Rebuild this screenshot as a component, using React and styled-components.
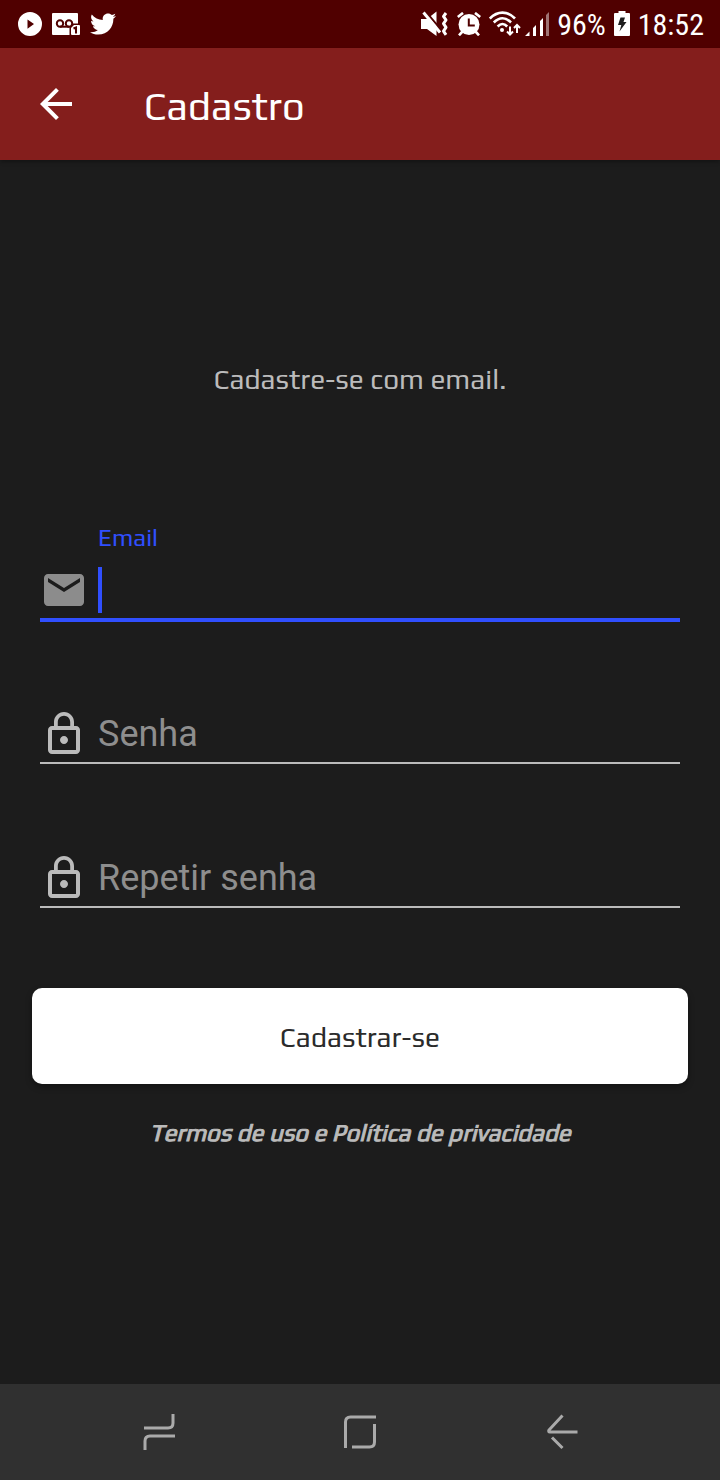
import React from "react";
import styled, { createGlobalStyle, css } from "styled-components";
import { FaTwitter } from "react-icons/fa";

const titleFont = `Play, "Noto Sans", "Open Sans", sans-serif`;
const inputFont = `Roboto, "Noto Sans", sans-serif`;
const statusFont = `"Roboto Condensed", "Liberation Sans Narrow", sans-serif`;

const GlobalStyle = createGlobalStyle`
  *, *::before, *::after { box-sizing: border-box; }
  body { margin: 0; background: #1c1c1c; }
  svg { display: block; flex: none; }
`;

const Screen = styled.div`
  display: flex;
  flex-direction: column;
  min-height: 100vh;
  background: #1c1c1c;
  font-family: ${titleFont};
`;

const StatusBar = styled.div`
  display: flex;
  align-items: center;
  justify-content: space-between;
  height: 48px;
  padding: 0 16px 0 18px;
  background: #500000;
  color: #fff;
`;

const StatusGroup = styled.div`
  display: flex;
  align-items: center;
  gap: ${(p) => p.$gap}px;
`;

const StatusText = styled.span`
  padding-top: 2px;
  font: 30px/46px ${statusFont};
`;

const AppBar = styled.header`
  display: flex;
  align-items: center;
  gap: 64px;
  height: 112px;
  padding: 0 32px;
  background: #841e1c;
  color: #fff;
  box-shadow: 0 2px 4px rgba(0, 0, 0, 0.3);
`;

const IconButton = styled.button`
  display: flex;
  padding: 0;
  border: 0;
  background: none;
  color: inherit;
`;

const Title = styled.h1`
  margin: 0;
  padding-top: 4px;
  font-size: 40px;
  font-weight: 400;
  line-height: 48px;
`;

const Content = styled.main`
  flex: 1;
  padding: 200px 32px 32px;
`;

const Intro = styled.p`
  margin: 0 0 124px;
  color: #bbb;
  font-size: 28px;
  line-height: 38px;
  text-align: center;
`;

const Fields = styled.div`
  display: flex;
  flex-direction: column;
  gap: 44px;
  margin: 0 8px 78px;
`;

const Field = styled.div`
  position: relative;
  padding-top: 44px;
`;

const FieldRow = styled.div`
  display: flex;
  gap: 10px;
  padding-bottom: 4px;
`;

const Label = styled.label`
  position: absolute;
  left: 58px;
  pointer-events: none;
  ${(p) =>
    p.$floating
      ? css`
          top: 0;
          color: #304ffe;
          font-size: 24px;
          line-height: 32px;
        `
      : css`
          top: 44px;
          color: #8e8e8e;
          font: 36px/48px ${inputFont};
        `}
`;

const Input = styled.input`
  flex: 1;
  min-width: 0;
  height: 48px;
  padding: 0;
  border: 0;
  outline: 0;
  background: none;
  color: #fff;
  caret-color: transparent;
  font: 36px/48px ${inputFont};
`;

const Caret = styled.span`
  position: absolute;
  top: 45px;
  left: 58px;
  width: 4px;
  height: 46px;
  background: #304ffe;
`;

const Underline = styled.div`
  height: 4px;
  border-top: ${(p) => (p.$active ? "4px solid #304ffe" : "2px solid #bbb")};
`;

const SubmitButton = styled.button`
  display: block;
  width: 100%;
  height: 96px;
  margin: 0 0 32px;
  padding: 2px 0 0;
  border: 0;
  border-radius: 10px;
  background: #fff;
  color: #2b2b2b;
  font: 28px/40px ${titleFont};
  box-shadow: 0 3px 6px rgba(0, 0, 0, 0.35);
`;

const Terms = styled.a`
  display: block;
  color: #bbb;
  font-size: 24px;
  font-style: italic;
  line-height: 34px;
  text-align: center;
  text-decoration: none;
  -webkit-text-stroke: 1px #bbb;
`;

const NavBar = styled.nav`
  display: flex;
  height: 96px;
  padding: 0 60px;
  background: #303030;
  color: #aaa;
`;

const NavButton = styled(IconButton)`
  flex: 1;
  align-items: center;
  justify-content: center;
`;

const PlayIcon = () => (
  <svg width="24" height="24" viewBox="0 0 24 24" fill="currentColor">
    <path fillRule="evenodd" d="M12 0a12 12 0 1 0 0 24a12 12 0 0 0 0-24zM9.500 7.500v9.200l6.500-4.600z" />
  </svg>
);

const VoicemailIcon = () => (
  <svg width="28" height="24" viewBox="0 0 28 24">
    <path fill="#fff" d="M1 1h24a1 1 0 0 1 1 1v20a1 1 0 0 1-1 1H1a1 1 0 0 1-1-1V2a1 1 0 0 1 1-1z" />
    <g fill="none" stroke="#500000" strokeWidth="2">
      <circle cx="8" cy="11.500" r="3.200" />
      <circle cx="17" cy="11.500" r="3.200" />
      <path d="M8 14.700h9" />
    </g>
    <path fill="#500000" d="M21 11.500h7V24H17.500v-9z" />
    <path fill="#fff" d="M22 13h5a1 1 0 0 1 1 1v8a1 1 0 0 1-1 1h-7a1 1 0 0 1-1-1v-6z" />
    <path fill="none" stroke="#500000" strokeWidth="2" d="M21.500 16.500l2.500-1v6" />
  </svg>
);

const MutedVibrateIcon = () => (
  <svg width="28" height="26" viewBox="0 0 28 26">
    <path fill="#fff" d="M0 8h6l9.500-7.500v24.500L6 18H0z" />
    <path stroke="#500000" strokeWidth="2" d="M5 1L21 20" />
    <path stroke="#fff" strokeWidth="3" d="M2.500 1.500L19 21.500" />
    <path fill="none" stroke="#fff" strokeWidth="3" strokeLinejoin="round" d="M25 2l-2.500 3.300 2.500 3.700-2.500 3.700 2.500 3.700-2.500 3.700 2.500 3.700" />
  </svg>
);

const AlarmIcon = () => (
  <svg width="24" height="24" viewBox="0 0 24 24">
    <circle cx="12" cy="12.500" r="10.500" fill="#fff" />
    <path stroke="#fff" strokeWidth="2.600" d="M0.800 5L6 0.900M18 0.900L23.200 5M5.500 19.500L2 23.300M18.500 19.500l3.500 3.800" />
    <path fill="none" stroke="#500000" strokeWidth="2" d="M11.800 6.500v7h6" />
  </svg>
);

const WifiIcon = () => (
  <svg width="32" height="26" viewBox="0 0 32 26">
    <g fill="none" stroke="#fff" strokeWidth="2.600">
      <path d="M0.800 7.500C8.500 -0.400 18.500 -0.400 26 7.500" />
      <path d="M4.800 11.500C10.500 5.800 16.500 5.800 22 11.500" />
      <path d="M8.600 15.500C12 12.100 15 12.100 18.200 15.500" />
    </g>
    <circle cx="13" cy="19" r="2" fill="#fff" />
    <path fill="none" stroke="#fff" strokeWidth="2" d="M21 15.500v8M18 20.500l3 3 3-3M28 22v-8M25 17l3-3 3 3" />
  </svg>
);

const SignalIcon = () => (
  <svg width="24" height="24" viewBox="0 0 24 24" fill="#fff">
    <path d="M0 24l4.500-4.500V24zM8 24v-8l3-3v11zM15 24V9l3-3v18z" />
    <path fillOpacity="0.450" d="M21 24V3l3-3v24z" />
  </svg>
);

const BatteryIcon = () => (
  <svg width="16" height="26" viewBox="0 0 16 26">
    <path fill="#fff" d="M4.500 0h7v2H15a1 1 0 0 1 1 1v21a1 1 0 0 1-1 1H1a1 1 0 0 1-1-1V3a1 1 0 0 1 1-1h3.500z" />
    <path fill="#1d1d1d" d="M6.500 6.500H11l-1.500 4.500H12.500L5.500 20.500 7.300 14H4z" />
  </svg>
);

const BackIcon = () => (
  <svg width="48" height="48" viewBox="0 0 24 24" fill="currentColor">
    <path d="M20 11H7.830l5.590-5.590L12 4l-8 8 8 8 1.410-1.410L7.830 13H20v-2z" />
  </svg>
);

const MailIcon = () => (
  <svg width="48" height="48" viewBox="0 0 24 24" fill="#8c8c8c">
    <path d="M20 4H4c-1.100 0-1.990.9-1.990 2L2 18c0 1.100.9 2 2 2h16c1.100 0 2-.9 2-2V6c0-1.100-.9-2-2-2zm0 4l-8 5-8-5V6l8 5 8-5v2z" />
  </svg>
);

const LockIcon = () => (
  <svg width="48" height="48" viewBox="0 0 24 24" fill="#bbb">
    <path d="M12 17c1.100 0 2-.9 2-2s-.9-2-2-2-2 .9-2 2 .9 2 2 2zm6-9h-1V6c0-2.760-2.240-5-5-5S7 3.240 7 6v2H6c-1.100 0-2 .9-2 2v10c0 1.100.9 2 2 2h12c1.100 0 2-.9 2-2V10c0-1.100-.9-2-2-2zM8.900 6c0-1.710 1.390-3.100 3.100-3.100s3.100 1.390 3.100 3.100v2H8.900V6zM18 20H6V10h12v10z" />
  </svg>
);

const NavIcon = ({ d }) => (
  <svg width="40" height="40" viewBox="0 0 40 40" fill="none" stroke="currentColor" strokeWidth="3">
    <path d={d} />
  </svg>
);

const fields = [
  { id: "email", label: "Email", type: "email", icon: MailIcon, active: true },
  { id: "senha", label: "Senha", type: "password", icon: LockIcon },
  { id: "repetir", label: "Repetir senha", type: "password", icon: LockIcon },
];

const navItems = [
  { label: "Recentes", d: "M4 16h24q5 0 5-5V2M35 24H10q-5 0-5 5v9" },
  { label: "Início", d: "M36 5H10.500q-5 0-5 5v26M34.500 12v18q0 5-5 5H12" },
  { label: "Voltar", d: "M37.500 20H10q-2 0-1-2L22.500 3.500M12 25.500L22.500 36" },
];

export default function App() {
  return (
    <Screen>
      <GlobalStyle />
      <StatusBar>
        <StatusGroup $gap={10}>
          <PlayIcon />
          <VoicemailIcon />
          <FaTwitter size={26} />
        </StatusGroup>
        <StatusGroup $gap={8}>
          <MutedVibrateIcon />
          <AlarmIcon />
          <StatusGroup $gap={4}>
            <WifiIcon />
            <SignalIcon />
          </StatusGroup>
          <StatusText>96%</StatusText>
          <BatteryIcon />
          <StatusText>18:52</StatusText>
        </StatusGroup>
      </StatusBar>
      <AppBar>
        <IconButton type="button" aria-label="Voltar">
          <BackIcon />
        </IconButton>
        <Title>Cadastro</Title>
      </AppBar>
      <Content>
        <Intro>Cadastre-se com email.</Intro>
        <form onSubmit={(e) => e.preventDefault()}>
          <Fields>
            {fields.map(({ id, label, type, icon: Icon, active }) => (
              <Field key={id}>
                <Label htmlFor={id} $floating={active}>
                  {label}
                </Label>
                <FieldRow>
                  <Icon />
                  <Input id={id} type={type} />
                </FieldRow>
                {active && <Caret />}
                <Underline $active={active} />
              </Field>
            ))}
          </Fields>
          <SubmitButton type="submit">Cadastrar-se</SubmitButton>
        </form>
        <Terms href="#termos">Termos de uso e Política de privacidade</Terms>
      </Content>
      <NavBar>
        {navItems.map(({ label, d }) => (
          <NavButton key={label} type="button" aria-label={label}>
            <NavIcon d={d} />
          </NavButton>
        ))}
      </NavBar>
    </Screen>
  );
}
